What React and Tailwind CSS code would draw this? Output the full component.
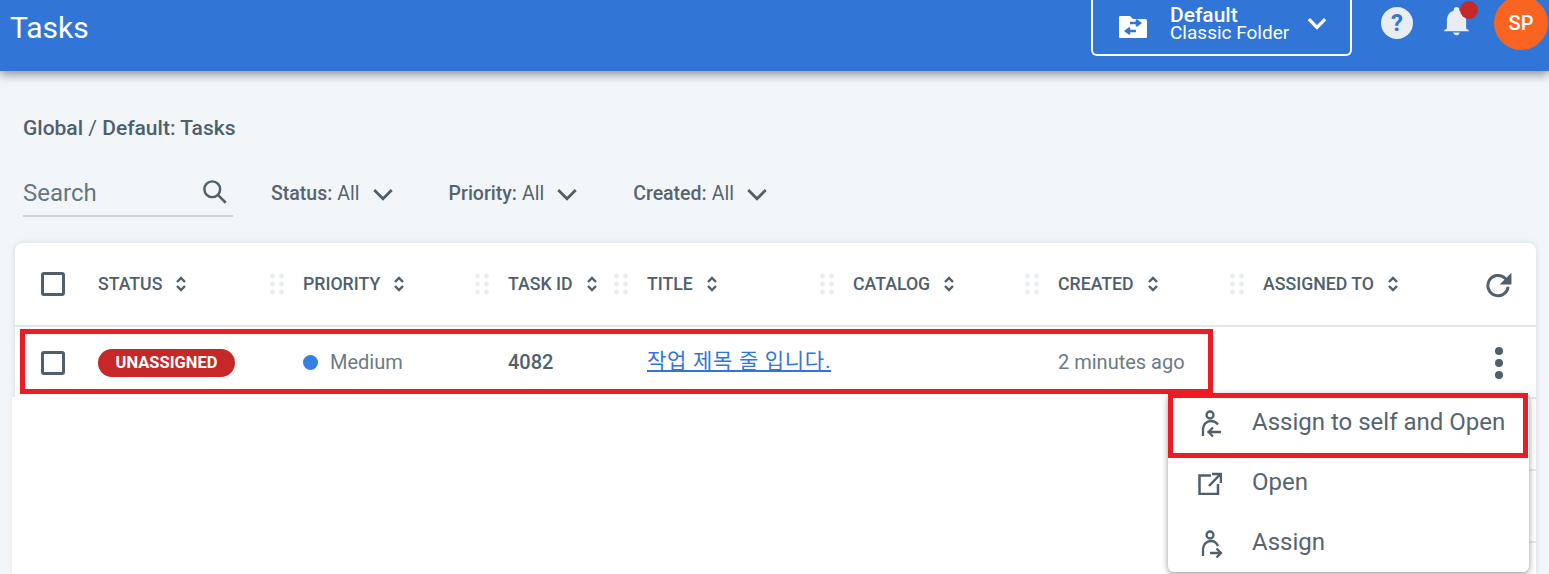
import React from "react";

const Chevron = ({ className = "", sw = "2.400" }) => (
  <svg viewBox="0 0 24 24" className={className} fill="none" stroke="currentColor" strokeWidth={sw}><path d="M4.500 8.500 12 16l7.500-7.500" /></svg>
);
const Sort = () => (
  <svg viewBox="0 0 12 18" className="w-[12px] h-[18px] text-[#4f5f6b]" fill="none" stroke="currentColor" strokeWidth="2.400"><path d="M2 7l4-4 4 4M2 11l4 4 4-4" /></svg>
);
const Handle = () => (
  <svg viewBox="0 0 14 22" className="w-[14px] h-[22px] text-[#e9edf0]" fill="currentColor">
    {[2.5, 11.5].flatMap((x) => [3, 11, 19].map((y) => <circle key={x + "-" + y} cx={x} cy={y} r="2.400" />))}
  </svg>
);
const Box = ({ className = "" }) => <div className={`w-[24px] h-[24px] border-[3px] border-[#4f5f6b] rounded-[3px] ${className}`} />;

const Col = ({ label, w, handle = true }) => (
  <div className={`flex items-center shrink-0 ${w}`}>
    {handle && <div className="w-[33px] shrink-0 -ml-[33px]"><Handle /></div>}
    <span className="text-[17.7px] text-[#4f5f6b] font-medium mr-[13px]">{label}</span>
    <Sort />
  </div>
);

const UserIcon = ({ dir }) => (
  <svg viewBox="0 0 26 28" className="w-[26px] h-[28px] text-[#4f5f6b] mt-[2px]" fill="none" stroke="currentColor" strokeWidth="2.300">
    <circle cx="11" cy="5" r="3.500" />
    {dir === "in"
      ? <path d="M4 26v-7a8 8 0 0 1 8-8c3 0 5 1 7 3.500M22 22H9.500M14 17.500l-4.500 4.500 4.500 4.500" />
      : <path d="M4 26v-7a8 8 0 0 1 8-8c3 0 5.500 1.500 7 5M11 23H22M17.500 18.500 22 23l-4.500 4.500" />}
  </svg>
);
const OpenIcon = () => (
  <svg viewBox="0 0 24 24" className="w-[24px] h-[24px] text-[#4f5f6b] -ml-[1px]" fill="none" stroke="currentColor" strokeWidth="2.500">
    <path d="M13 4.500H1.500V23H20V13M11 15 22 3.500M14 3h9v9" />
  </svg>
);

const MenuItem = ({ icon, label }) => (
  <div className="h-[60px] flex items-center pl-[31px]">
    <div className="w-[53px] shrink-0">{icon}</div>
    <span className="text-[24px] leading-none text-[#56646f] -mt-[2px]">{label}</span>
  </div>
);

export default function App() {
  return (
    <div className="relative w-[1549px] h-[574px] overflow-hidden bg-[#f2f6f9] font-['Roboto','Noto_Sans_CJK_KR',sans-serif]">
      <header className="h-[71px] bg-[#3176d6] shadow-[0_3px_10px_rgba(0,0,0,0.45)] flex items-start pl-[10px] relative z-10">
        <h1 className="text-[30px] leading-[55px] text-white">Tasks</h1>
        <div className="ml-auto flex items-start">
          <div className="w-[261px] h-[57px] -mt-[1px] border-2 border-white border-t-0 rounded-b-[6px] flex items-center pl-[25px]">
            <svg viewBox="0 0 30 24" className="w-[30px] h-[24px] shrink-0">
              <path d="M2 1h10l3 3h12a2 2 0 0 1 2 2v16a1 1 0 0 1-1 1H2a1 1 0 0 1-1-1V2a1 1 0 0 1 1-1z" fill="#fff" />
              <path d="M12 8h9M18 5l4 3-4 3M18 16H9M12 13l-4 3 4 3" stroke="#3176d6" strokeWidth="2.400" fill="none" />
            </svg>
            <div className="ml-[22px] -mt-[4px] flex flex-col text-white whitespace-nowrap">
              <span className="text-[21px] leading-[16px] font-medium">Default</span>
              <span className="text-[19px] leading-[19px]">Classic Folder</span>
            </div>
            <Chevron sw="3" className="w-[26px] h-[26px] ml-[15px] -mt-[7px] text-white shrink-0" />
          </div>
          <div className="w-[32px] h-[32px] ml-[29px] mt-[7px] rounded-full bg-[#e9edf2] text-[#3176d6] flex items-center justify-center text-[24px] font-bold">?</div>
          <div className="relative ml-[27px] mt-[5px] w-[33px] h-[33px]">
            <svg viewBox="0 0 24 24" className="w-[33px] h-[33px]" fill="#e9edf2"><path d="M12 22a2.500 2.500 0 0 0 2.400-2H9.600a2.500 2.500 0 0 0 2.400 2zm7-5v-6c0-3.300-1.800-6-5-6.800V3.500a2 2 0 0 0-4 0v.7C6.800 5 5 7.700 5 11v6l-2 1.500V19h18v-.5z" /></svg>
            <div className="absolute -top-[4px] left-[20px] w-[18px] h-[18px] rounded-full bg-[#c62828]" />
          </div>
          <div className="ml-[21px] -mt-[4px] mr-[1px] w-[54px] h-[54px] rounded-full bg-[#f96520] text-white flex items-center justify-center text-[20px] font-medium">SP</div>
        </div>
      </header>

      <main className="pl-[23px] pt-[45px]">
        <div className="text-[21px] leading-[24px] font-medium text-[#4f5f6b]">Global <span className="font-normal">/</span> Default: Tasks</div>
        <div className="flex items-center mt-[30px] h-[47px]">
          <div className="w-[210px] h-[47px] border-b-2 border-[#d0d5d9] flex items-center justify-between pr-[5px]">
            <span className="text-[24px] text-[#67767f]">Search</span>
            <svg viewBox="0 0 24 24" className="w-[27px] h-[27px] text-[#4f5f6b] -mt-[2px]" fill="none" stroke="currentColor" strokeWidth="2.200"><circle cx="10" cy="10" r="7" /><path d="M15 15l7 7" /></svg>
          </div>
          {[["Status", "ml-[38px]"], ["Priority", "ml-[52px]"], ["Created", "ml-[52px]"]].map(([l, m]) => (
            <div key={l} className={`flex items-center ${m} text-[19.5px] text-[#56646f]`}>
              <span className="font-medium">{l}:</span><span className="ml-[5px]">All</span>
              <Chevron className="w-[28px] h-[28px] ml-[9px] text-[#4f5f6b]" />
            </div>
          ))}
        </div>
      </main>

      <section className="absolute left-[15px] top-[243px] w-[1521px] h-[331px] bg-white rounded-t-[8px] shadow-[0_0_6px_rgba(0,0,0,0.12)]">
        <div className="h-[84px] flex items-center border-b-2 border-[#e3e6e8] pl-[26px]">
          <div className="w-[57px] shrink-0"><Box /></div>
          <Col label="STATUS" w="w-[205px]" handle={false} />
          <Col label="PRIORITY" w="w-[205px]" />
          <Col label="TASK ID" w="w-[139px]" />
          <Col label="TITLE" w="w-[206px]" />
          <Col label="CATALOG" w="w-[205px]" />
          <Col label="CREATED" w="w-[205px]" />
          <Col label="ASSIGNED TO" w="w-[223px]" />
          <svg viewBox="0 0 24 24" className="w-[27px] h-[27px] text-[#4f5f6b] -ml-[1px] mt-[1px]" fill="none" stroke="currentColor" strokeWidth="2.600"><path d="M20.500 14a9 9 0 1 1-2.700-7.500L21 9.500" /><path d="M23.500 1.500v10.500H13z" fill="currentColor" stroke="none" /></svg>
        </div>
        <div className="h-[72px] flex items-center pl-[26px] border-b-2 border-[#e3e6e8]">
          <div className="w-[57px] shrink-0"><Box className="mt-[2px]" /></div>
          <div className="w-[205px] shrink-0 mt-[2px]">
            <span className="inline-flex h-[28px] w-[137px] items-center justify-center rounded-full bg-[#c62828] text-white text-[16.500px] font-bold">UNASSIGNED</span>
          </div>
          <div className="w-[205px] shrink-0 flex items-center text-[20px] text-[#6b7a85]">
            <span className="w-[15px] h-[15px] rounded-full bg-[#3580e0] mr-[12px]" />Medium
          </div>
          <div className="w-[139px] shrink-0 text-[20px] font-medium text-[#4f5f6b]">4082</div>
          <div className="w-[411px] shrink-0 text-[21px] tracking-[0.7px] text-[#3176d6] underline">작업 제목 줄 입니다.</div>
          <div className="w-[205px] shrink-0 text-[20px] text-[#6b7a85] whitespace-nowrap">2 minutes ago</div>
          <div className="ml-[232px] mt-[2px] flex flex-col gap-[4px]">
            <span className="w-[8px] h-[8px] rounded-full bg-[#4f5f6b]" /><span className="w-[8px] h-[8px] rounded-full bg-[#4f5f6b]" /><span className="w-[8px] h-[8px] rounded-full bg-[#4f5f6b]" />
          </div>
        </div>
        <div className="h-[72px] border-b-2 border-[#e3e6e8]" />
        <div className="h-[72px] border-b-2 border-[#e3e6e8]" />
      </section>

      <div className="absolute left-[12px] top-[397px] w-[1157px] h-[177px] bg-white" />

      <div className="absolute left-[1168px] top-[393px] w-[361px] h-[179px] bg-white rounded-[6px] shadow-[0_2px_6px_rgba(0,0,0,0.4)]">
        <MenuItem icon={<UserIcon dir="in" />} label="Assign to self and Open" />
        <MenuItem icon={<OpenIcon />} label="Open" />
        <MenuItem icon={<UserIcon dir="out" />} label="Assign" />
      </div>

      <div className="absolute left-[20px] top-[329px] w-[1193px] h-[65px] border-[5px] border-[#ed1c24]" />
      <div className="absolute left-[1168px] top-[393px] w-[360px] h-[65px] border-[5px] border-[#ed1c24]" />
    </div>
  );
}
